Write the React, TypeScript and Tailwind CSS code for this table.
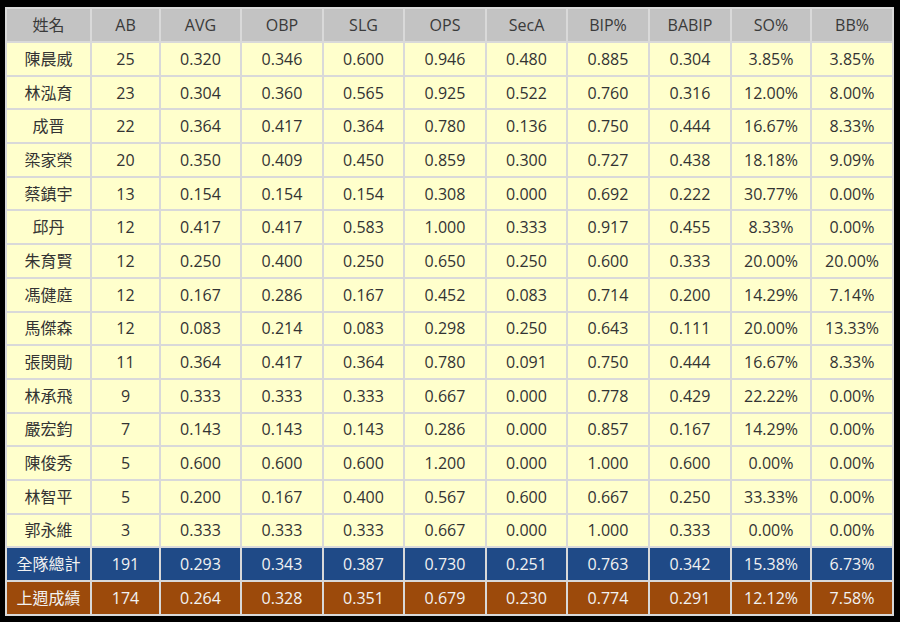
import * as React from "react";

const headers = ["姓名", "AB", "AVG", "OBP", "SLG", "OPS", "SecA", "BIP%", "BABIP", "SO%", "BB%"];

const rows: string[][] = [
  ["陳晨威", "25", "0.320", "0.346", "0.600", "0.946", "0.480", "0.885", "0.304", "3.85%", "3.85%"],
  ["林泓育", "23", "0.304", "0.360", "0.565", "0.925", "0.522", "0.760", "0.316", "12.00%", "8.00%"],
  ["成晋", "22", "0.364", "0.417", "0.364", "0.780", "0.136", "0.750", "0.444", "16.67%", "8.33%"],
  ["梁家榮", "20", "0.350", "0.409", "0.450", "0.859", "0.300", "0.727", "0.438", "18.18%", "9.09%"],
  ["蔡鎮宇", "13", "0.154", "0.154", "0.154", "0.308", "0.000", "0.692", "0.222", "30.77%", "0.00%"],
  ["邱丹", "12", "0.417", "0.417", "0.583", "1.000", "0.333", "0.917", "0.455", "8.33%", "0.00%"],
  ["朱育賢", "12", "0.250", "0.400", "0.250", "0.650", "0.250", "0.600", "0.333", "20.00%", "20.00%"],
  ["馮健庭", "12", "0.167", "0.286", "0.167", "0.452", "0.083", "0.714", "0.200", "14.29%", "7.14%"],
  ["馬傑森", "12", "0.083", "0.214", "0.083", "0.298", "0.250", "0.643", "0.111", "20.00%", "13.33%"],
  ["張閔勛", "11", "0.364", "0.417", "0.364", "0.780", "0.091", "0.750", "0.444", "16.67%", "8.33%"],
  ["林承飛", "9", "0.333", "0.333", "0.333", "0.667", "0.000", "0.778", "0.429", "22.22%", "0.00%"],
  ["嚴宏鈞", "7", "0.143", "0.143", "0.143", "0.286", "0.000", "0.857", "0.167", "14.29%", "0.00%"],
  ["陳俊秀", "5", "0.600", "0.600", "0.600", "1.200", "0.000", "1.000", "0.600", "0.00%", "0.00%"],
  ["林智平", "5", "0.200", "0.167", "0.400", "0.567", "0.600", "0.667", "0.250", "33.33%", "0.00%"],
  ["郭永維", "3", "0.333", "0.333", "0.333", "0.667", "0.000", "1.000", "0.333", "0.00%", "0.00%"],
];

const total = ["全隊總計", "191", "0.293", "0.343", "0.387", "0.730", "0.251", "0.763", "0.342", "15.38%", "6.73%"];
const lastWeek = ["上週成績", "174", "0.264", "0.328", "0.351", "0.679", "0.230", "0.774", "0.291", "12.12%", "7.58%"];

// column widths measured off the screenshot
const widths = [85, 69, 81, 82, 81, 82, 81, 82, 82, 80, 82];

const cell = "border-2 border-[#d9d9d9] text-center align-middle p-0";

const App = () => {
  return (
    <div
      className="h-[622px] w-[900px] bg-black pl-[5px] pt-[7px]"
      style={{ fontFamily: '"Open Sans", "Noto Sans CJK TC", sans-serif' }}
    >
      <table className="table-fixed border-collapse text-[16px] leading-none">
        <colgroup>
          {widths.map((w, i) => (
            <col key={i} style={{ width: w }} />
          ))}
        </colgroup>
        <thead>
          <tr className="h-[34px] bg-[#c3c3c3] text-[#3a3a3a]">
            {headers.map((h) => (
              <th key={h} className={`${cell} font-normal`}>
                {h}
              </th>
            ))}
          </tr>
        </thead>
        <tbody>
          {rows.map((r) => (
            <tr key={r[0]} className="h-[33.7px] bg-[#ffffcc] text-[#333]">
              {r.map((v, i) => (
                <td key={i} className={cell}>
                  {v}
                </td>
              ))}
            </tr>
          ))}
          <tr className="h-[33.7px] bg-[#1f4a87] text-[#f2f2f2]">
            {total.map((v, i) => (
              <td key={i} className={cell}>
                {v}
              </td>
            ))}
          </tr>
          <tr className="h-[33.7px] bg-[#9c4a0b] text-[#f2f2f2]">
            {lastWeek.map((v, i) => (
              <td key={i} className={cell}>
                {v}
              </td>
            ))}
          </tr>
        </tbody>
      </table>
    </div>
  );
};

export default App;
